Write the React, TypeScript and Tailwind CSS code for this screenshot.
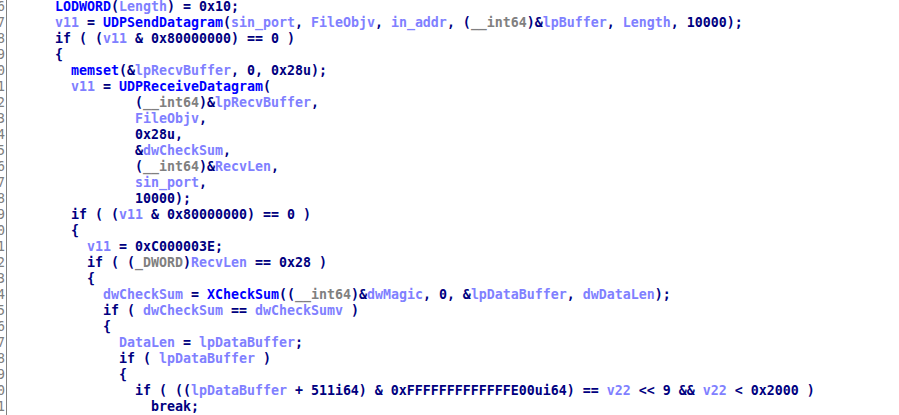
type Tok = [string, string];

const K = 'text-[#000080]';
const F = 'text-[#0000ff]';
const V = 'text-[#8080ff]';
const T = 'text-[#808080]';

const k = (s: string): Tok => [K, s];
const f = (s: string): Tok => [F, s];
const v = (s: string): Tok => [V, s];
const t = (s: string): Tok => [T, s];

// indent is in characters, relative to the first code column
const lines: { indent: number; toks: Tok[] }[] = [
  { indent: 0, toks: [f('LODWORD'), k('('), v('Length'), k(') = 0x10;')] },
  {
    indent: 0,
    toks: [
      v('v11'), k(' = '), f('UDPSendDatagram'), k('('), v('sin_port'), k(', '), v('FileObjv'), k(', '),
      v('in_addr'), k(', ('), t('__int64'), k(')&'), v('lpBuffer'), k(', '), v('Length'), k(', 10000);'),
    ],
  },
  { indent: 0, toks: [k('if ( ('), v('v11'), k(' & 0x80000000) == 0 )')] },
  { indent: 0, toks: [k('{')] },
  { indent: 2, toks: [f('memset'), k('(&'), v('lpRecvBuffer'), k(', 0, 0x28u);')] },
  { indent: 2, toks: [v('v11'), k(' = '), f('UDPReceiveDatagram'), k('(')] },
  { indent: 10, toks: [k('('), t('__int64'), k(')&'), v('lpRecvBuffer'), k(',')] },
  { indent: 10, toks: [v('FileObjv'), k(',')] },
  { indent: 10, toks: [k('0x28u,')] },
  { indent: 10, toks: [k('&'), v('dwCheckSum'), k(',')] },
  { indent: 10, toks: [k('('), t('__int64'), k(')&'), v('RecvLen'), k(',')] },
  { indent: 10, toks: [v('sin_port'), k(',')] },
  { indent: 10, toks: [k('10000);')] },
  { indent: 2, toks: [k('if ( ('), v('v11'), k(' & 0x80000000) == 0 )')] },
  { indent: 2, toks: [k('{')] },
  { indent: 4, toks: [v('v11'), k(' = 0xC000003E;')] },
  { indent: 4, toks: [k('if ( ('), t('_DWORD'), k(')'), v('RecvLen'), k(' == 0x28 )')] },
  { indent: 4, toks: [k('{')] },
  {
    indent: 6,
    toks: [
      v('dwCheckSum'), k(' = '), f('XCheckSum'), k('(('), t('__int64'), k(')&'), v('dwMagic'),
      k(', 0, &'), v('lpDataBuffer'), k(', '), v('dwDataLen'), k(');'),
    ],
  },
  { indent: 6, toks: [k('if ( '), v('dwCheckSum'), k(' == '), v('dwCheckSumv'), k(' )')] },
  { indent: 6, toks: [k('{')] },
  { indent: 8, toks: [v('DataLen'), k(' = '), v('lpDataBuffer'), k(';')] },
  { indent: 8, toks: [k('if ( '), v('lpDataBuffer'), k(' )')] },
  { indent: 8, toks: [k('{')] },
  {
    indent: 10,
    toks: [
      k('if ( (('), v('lpDataBuffer'), k(' + 511i64) & 0xFFFFFFFFFFFFFE00ui64) == '), v('v22'),
      k(' << 9 && '), v('v22'), k(' < 0x2000 )'),
    ],
  },
  { indent: 12, toks: [k('break;')] },
];

export default function App() {
  return (
    <div
      className="w-[899px] h-[415px] overflow-hidden bg-white flex text-[13.29px] leading-[16px]"
      style={{ fontFamily: '"DejaVu Sans Mono", "Liberation Mono", monospace' }}
    >
      {/* line number gutter, mostly scrolled off */}
      <div className="w-[7px] shrink-0 overflow-hidden border-r border-[#808080] mt-[-1px]">
        <div className="w-[6px] flex flex-col items-end">
          {lines.map((_, i) => (
            <div key={i} className="text-[#808080] whitespace-pre pr-[1px] h-[16px]">
              {56 + i}
            </div>
          ))}
        </div>
      </div>

      {/* pseudocode */}
      <div className="flex-1 pl-[48px] mt-[-1px] font-bold">
        {lines.map((ln, i) => (
          <div key={i} className="h-[16px] whitespace-pre">
            <span>{' '.repeat(ln.indent)}</span>
            {ln.toks.map(([c, s], j) => (
              <span key={j} className={c}>
                {s}
              </span>
            ))}
          </div>
        ))}
      </div>
    </div>
  );
}
